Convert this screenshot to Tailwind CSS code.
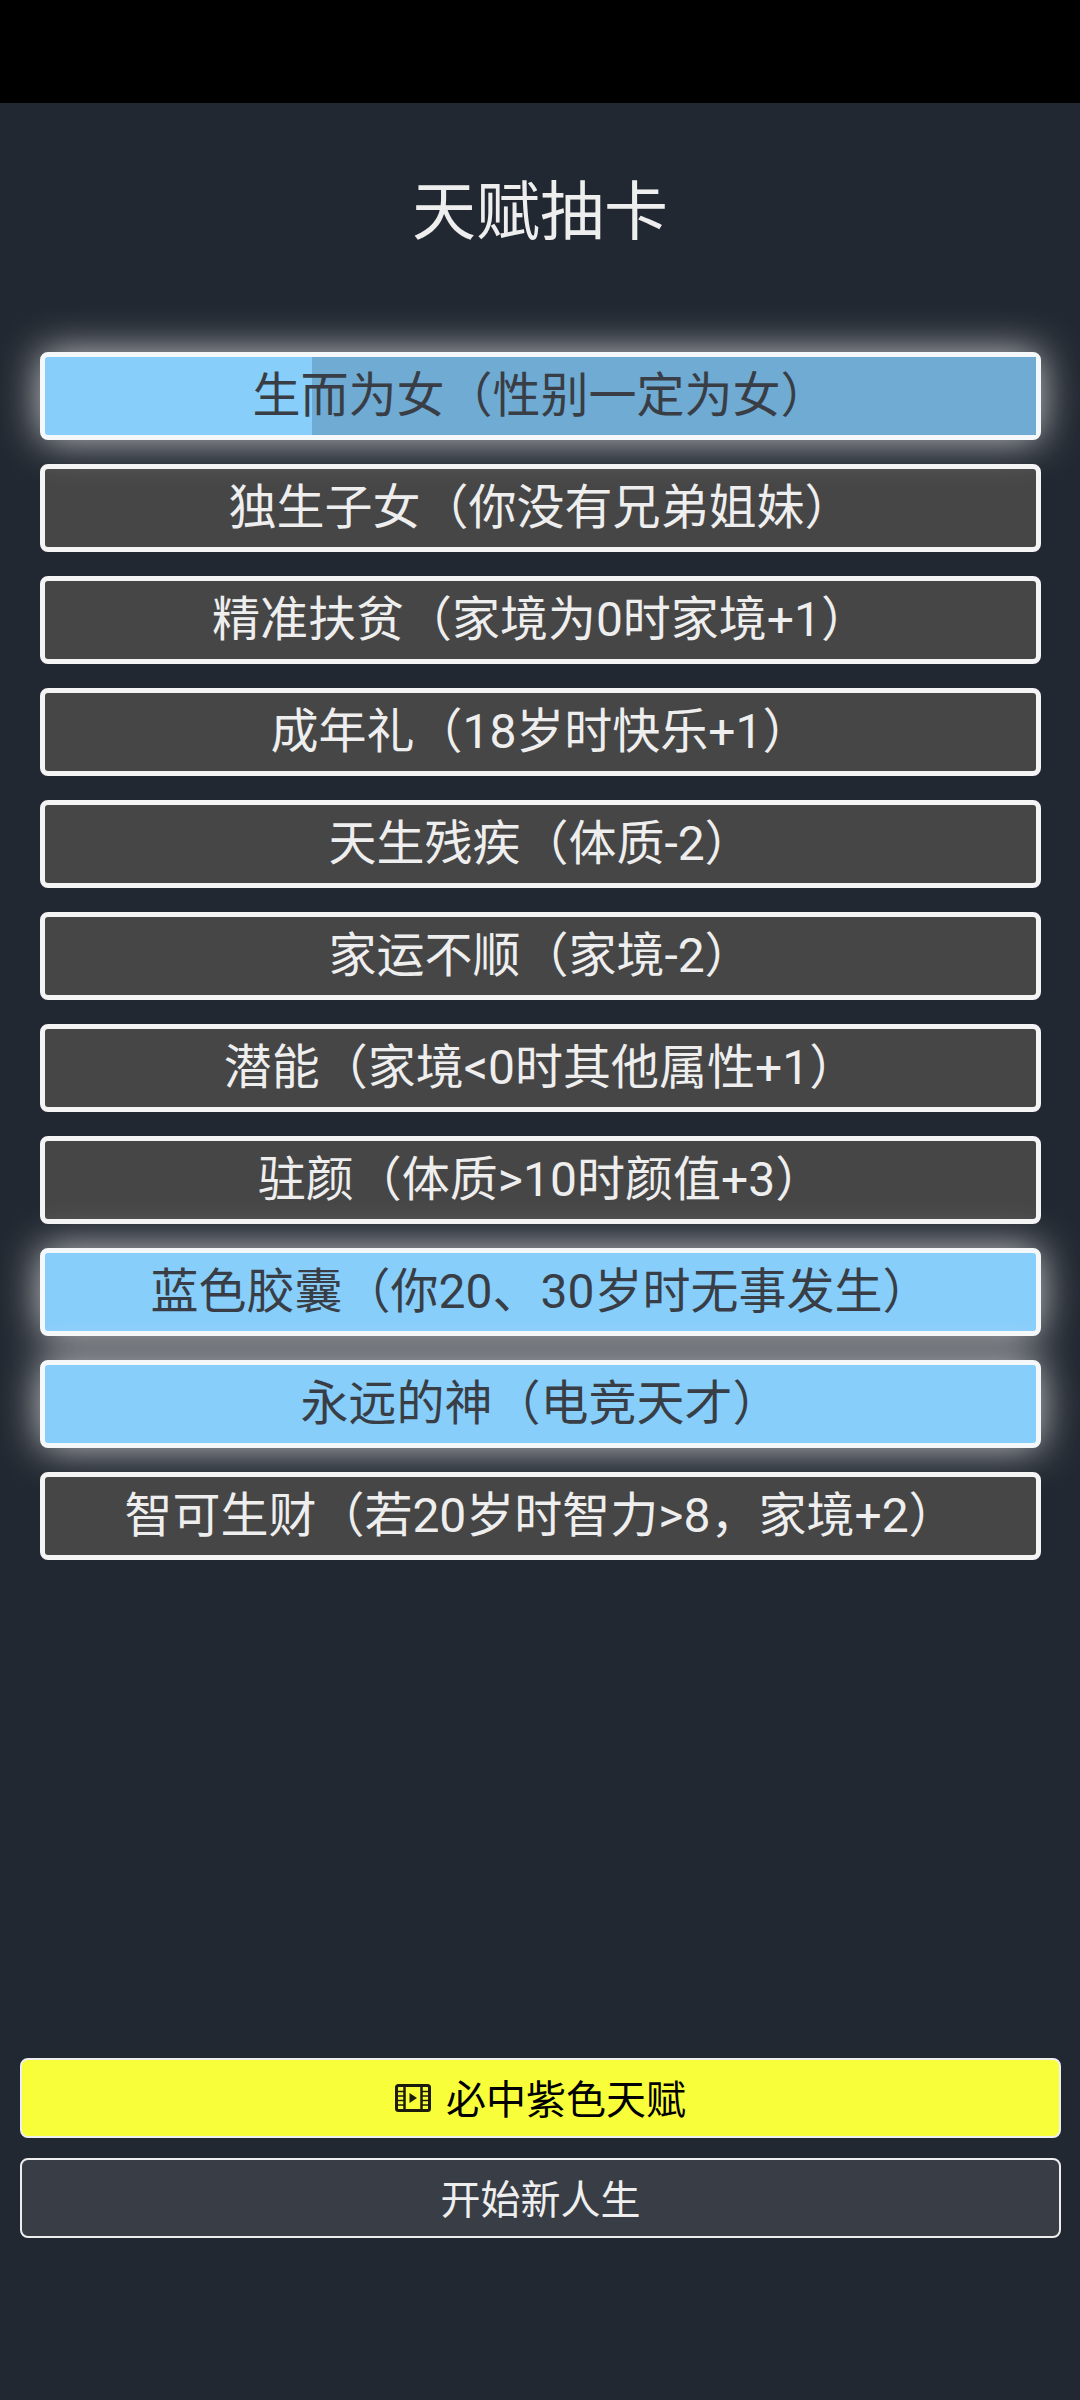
<!DOCTYPE html>
<html lang="zh-CN">
<head>
    <meta charset="UTF-8">
    <meta name="viewport" content="width=device-width, initial-scale=1.0">
    <title>天赋抽卡</title>
    <script src="https://cdn.jsdelivr.net/npm/@tailwindcss/browser@4"></script>
</head>
<body class="bg-[#222831] font-['Roboto','Noto_Sans_CJK_SC',sans-serif]">
    <div class="w-[1080px] h-[2400px] flex flex-col">
        <div class="h-[103px] bg-black"></div>

        <h1 class="h-[249px] pt-[75px] text-center text-[64px] leading-[70px] text-[#eeeeee]">天赋抽卡</h1>

        <!-- 天赋列表 -->
        <ul class="flex flex-col gap-[24px] pl-[40px] pr-[39px] text-[48px] text-center">
            <li class="relative h-[88px] flex items-center justify-center rounded-[8px] border-[5px] border-[#f4f8fa] bg-[#87cefa] text-[#393e46] shadow-[0_0_40px_#ffffffc0]">
                <div class="absolute inset-y-0 right-0 left-[267px] bg-[#6fabd2]"></div>
                <span class="relative">生而为女（性别一定为女）</span>
            </li>
            <li class="h-[88px] flex items-center justify-center rounded-[8px] border-[5px] border-[#f4f4f4] bg-[#464646] text-[#eeeeee]">独生子女（你没有兄弟姐妹）</li>
            <li class="h-[88px] flex items-center justify-center rounded-[8px] border-[5px] border-[#f4f4f4] bg-[#464646] text-[#eeeeee]">精准扶贫（家境为0时家境+1）</li>
            <li class="h-[88px] flex items-center justify-center rounded-[8px] border-[5px] border-[#f4f4f4] bg-[#464646] text-[#eeeeee]">成年礼（18岁时快乐+1）</li>
            <li class="h-[88px] flex items-center justify-center rounded-[8px] border-[5px] border-[#f4f4f4] bg-[#464646] text-[#eeeeee]">天生残疾（体质-2）</li>
            <li class="h-[88px] flex items-center justify-center rounded-[8px] border-[5px] border-[#f4f4f4] bg-[#464646] text-[#eeeeee]">家运不顺（家境-2）</li>
            <li class="h-[88px] flex items-center justify-center rounded-[8px] border-[5px] border-[#f4f4f4] bg-[#464646] text-[#eeeeee]">潜能（家境&lt;0时其他属性+1）</li>
            <li class="h-[88px] flex items-center justify-center rounded-[8px] border-[5px] border-[#f4f4f4] bg-[#464646] text-[#eeeeee]">驻颜（体质&gt;10时颜值+3）</li>
            <li class="h-[88px] flex items-center justify-center rounded-[8px] border-[5px] border-[#f4f8fa] bg-[#87cefa] text-[#393e46] shadow-[0_0_40px_#ffffffc0]">蓝色胶囊（你20、30岁时无事发生）</li>
            <li class="h-[88px] flex items-center justify-center rounded-[8px] border-[5px] border-[#f4f8fa] bg-[#87cefa] text-[#393e46] shadow-[0_0_40px_#ffffffc0]">永远的神（电竞天才）</li>
            <li class="h-[88px] flex items-center justify-center rounded-[8px] border-[5px] border-[#f4f4f4] bg-[#464646] text-[#eeeeee]">智可生财（若20岁时智力&gt;8，家境+2）</li>
        </ul>

        <!-- 底部按钮 -->
        <div class="mt-[498px] flex flex-col gap-[20px] pl-[20px] pr-[19px] text-[40px]">
            <button class="h-[80px] pt-[5px] flex items-center justify-center gap-[15px] rounded-[8px] border-[2px] border-[#eeeeee] bg-[#f8ff3a] text-black">
                <svg class="w-[36px] h-[28px] -mt-[5px]" viewBox="0 0 36 28" fill="none" stroke="#1c1c0a" stroke-width="3">
                    <rect x="1.5" y="1.5" width="33" height="25" rx="2"/>
                    <path d="M9.5 2v24M26.5 2v24" stroke-width="2.5"/>
                    <path d="M2 7.5h7M2 12h7M2 16.5h7M2 21h7M27 7.5h7M27 12h7M27 16.5h7M27 21h7" stroke-width="1.5"/>
                    <path d="M14.5 9l7.5 5-7.5 5z" fill="#1c1c0a" stroke="none"/>
                </svg>
                <span>必中紫色天赋</span>
            </button>
            <button class="h-[80px] pt-[5px] flex items-center justify-center rounded-[8px] border-[2px] border-[#eeeeee] bg-[#393e46] text-[#eeeeee]">开始新人生</button>
        </div>
    </div>
</body>
</html>
